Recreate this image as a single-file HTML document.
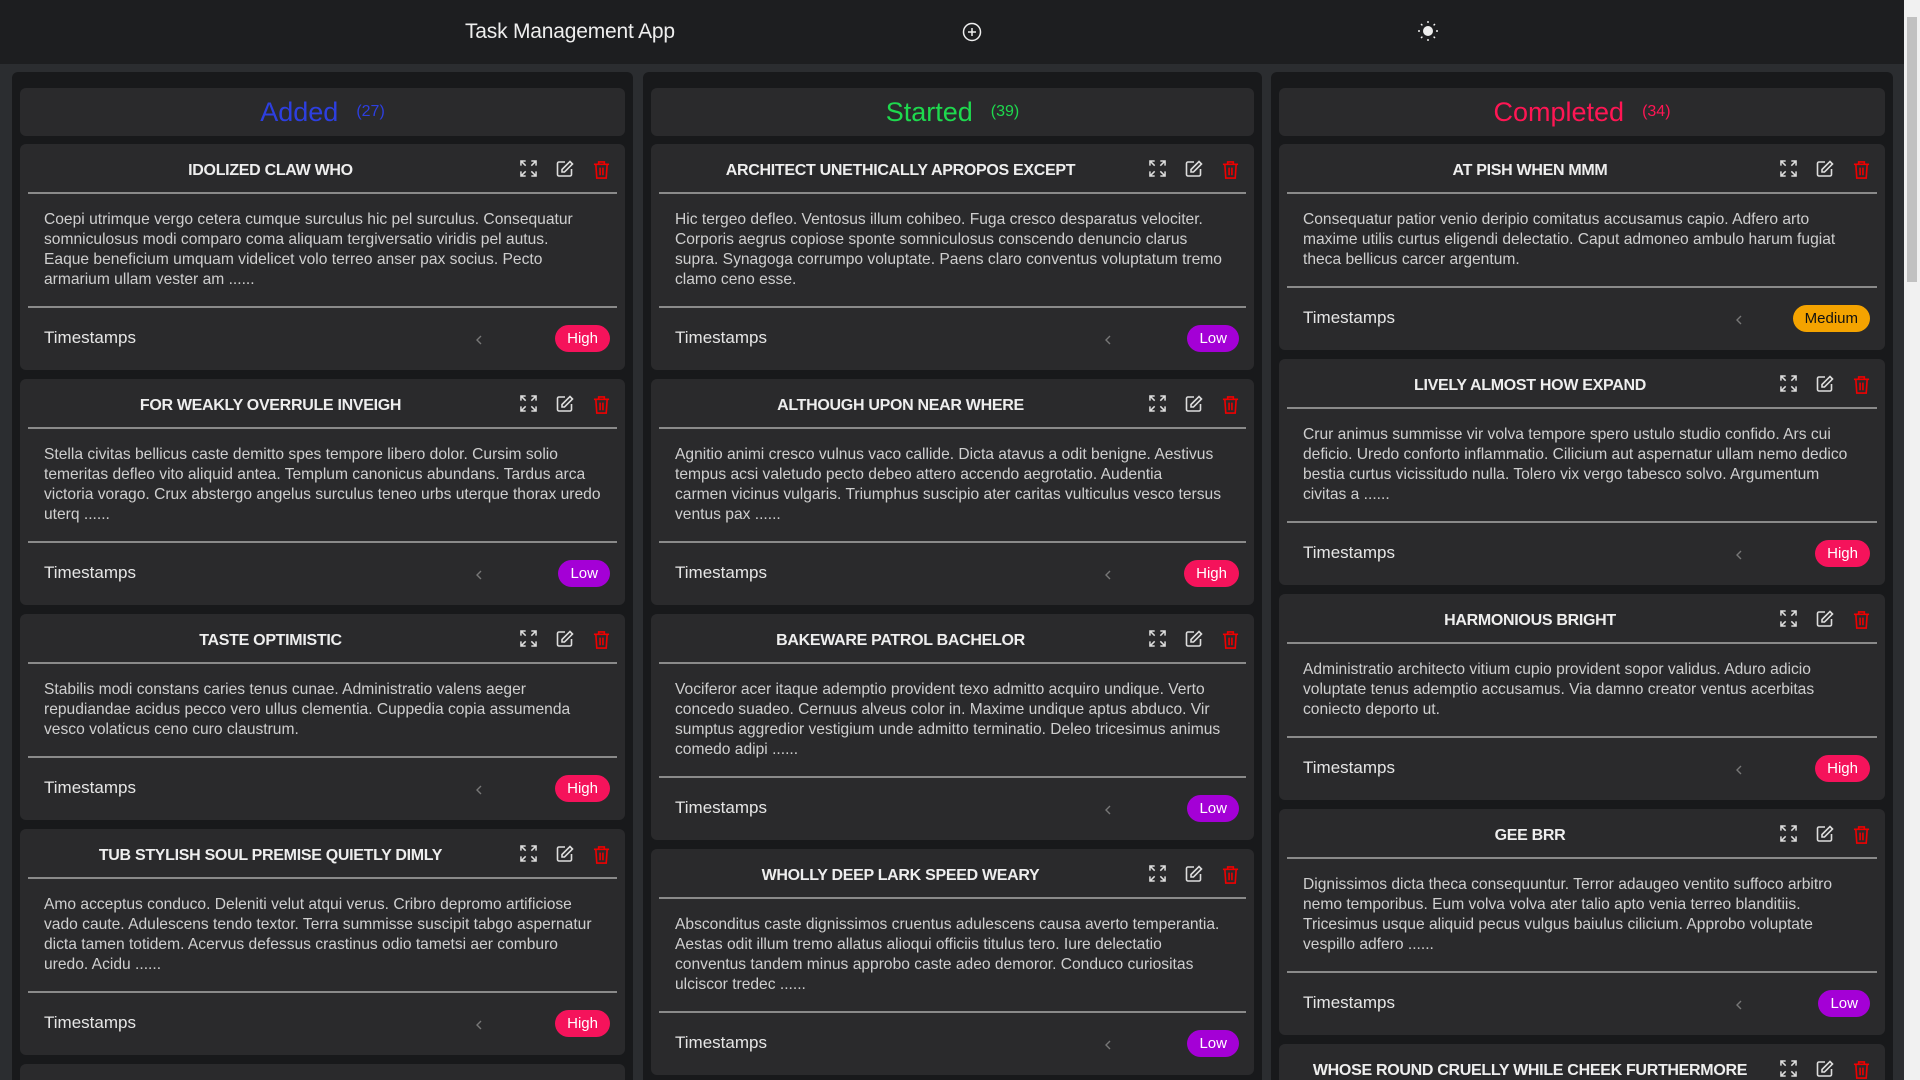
<!DOCTYPE html>
<html><head><meta charset="utf-8">
<style>
*{box-sizing:border-box;margin:0;padding:0}
html,body{width:1920px;height:1080px;overflow:hidden}
body{background:#2b2d30;font-family:"Liberation Sans",sans-serif;color:#ddd;position:relative}
.nav{position:absolute;left:0;top:0;width:1904px;height:64px;background:#1d1e20}
.nav .t{position:absolute;left:465px;top:20px;font-size:21px;color:#eee;letter-spacing:-0.2px}
.sb{position:absolute;right:0;top:0;width:16px;height:1080px;background:#f1f1f1}
.sb .th{position:absolute;left:3px;top:17px;width:10px;height:265px;background:#c1c1c1}
.col{position:absolute;top:72px;height:1020px;background:#18191b;border-radius:6px;padding:16px 8px 0}
.hd{height:48px;background:#2a2a2c;border-radius:6px;text-align:center;line-height:48px;margin-bottom:8px}
.hd b{font-weight:normal;font-size:27px;vertical-align:middle}
.hd i{font-style:normal;font-size:16px;margin-left:18px;vertical-align:middle}
.card{background:#2a2a2c;border-radius:6px;margin-bottom:9px;padding:0 8px}
.ct{height:50px;border-bottom:2px solid #8a8a8a;display:flex;align-items:center;position:relative;padding-top:6px}
.ct .n{flex:1;text-align:center;font-weight:bold;font-size:16px;color:#eee;padding-right:104px;letter-spacing:-0.3px;white-space:nowrap}
.ic{position:absolute;right:7px;top:16px;width:90px;height:20px}
.ic svg{position:absolute;top:0}
.bd{padding:16px 16px;font-size:15.6px;line-height:20px;color:#cfcfcf;border-bottom:2px solid #8a8a8a}
.ft{height:62px;position:relative}
.ft .ts{position:absolute;left:16px;top:20px;font-size:17px;color:#e6e6e6}
.ft .ch{position:absolute;right:134px;top:27px}
.bg{position:absolute;right:7px;top:17px;height:27px;border-radius:14px;padding:0 12px;line-height:27px;font-size:15px;color:#fff}
.High{background:#f5135b}.Low{background:#a400d6}.Medium{background:#f4a300;color:#111}
</style></head><body>
<div class="nav"><div class="t">Task Management App</div>
<svg style="position:absolute;left:962px;top:22px" width="20" height="20" viewBox="0 0 20 20" fill="none" stroke="#eee" stroke-width="1.5"><circle cx="10" cy="10" r="8.5"/><path d="M10 6v8M6 10h8"/></svg>
<svg style="position:absolute;left:1417px;top:20px" width="22" height="22" viewBox="0 0 22 22" fill="#eee"><circle cx="11" cy="11" r="5"/><g stroke="#eee" stroke-width="1.4"><path d="M11 1v2M11 19v2M1 11h2M19 11h2M4 4l1.4 1.4M16.6 16.6L18 18M4 18l1.4-1.4M16.6 5.4L18 4"/></g></svg>
</div>
<div class="sb"><div class="th"></div></div>
<div id="cols"></div>
<script>
const ic=`<div class="ic"><svg style="left:0" width="17" height="17" viewBox="0 0 18 18" fill="none" stroke="#ddd" stroke-width="1.6"><path d="M1 6V1h5M1 1l5 5M17 6V1h-5M17 1l-5 5M1 12v5h5M1 17l5-5M17 12v5h-5M17 17l-5-5"/></svg><svg style="left:36px" width="18" height="18" viewBox="0 0 18 18" fill="none" stroke="#ddd" stroke-width="1.6"><path d="M9 2H3a1.5 1.5 0 0 0-1.5 1.5v11A1.5 1.5 0 0 0 3 16h11a1.5 1.5 0 0 0 1.5-1.5V9"/><path d="M14 1.5l2.5 2.5-8 8H6v-2.5z"/></svg><svg style="left:73px" width="17" height="20" viewBox="0 0 18 20" fill="none" stroke="#e00" stroke-width="1.7"><path d="M1 4h16M6 4V1.5h6V4M3 4l1 14.5h10L15 4M7.5 7.5v8M10.5 7.5v8"/></svg></div>`;
const ch=`<svg class="ch" width="8" height="10" viewBox="0 0 8 10" fill="none" stroke="#777" stroke-width="1.4"><path d="M6 1L2 5l4 4"/></svg>`;
function card(t,b,p){return `<div class="card"><div class="ct"><div class="n">${t}</div>${ic}</div><div class="bd">${b}</div><div class="ft"><div class="ts">Timestamps</div>${ch}<div class="bg ${p}">${p}</div></div></div>`}
const cols=[
{x:12,w:621,name:"Added",n:27,c:"#2d3fe0",cards:[
["IDOLIZED CLAW WHO","Coepi utrimque vergo cetera cumque surculus hic pel surculus. Consequatur somniculosus modi comparo coma aliquam tergiversatio viridis pel autus.<br>Eaque beneficium umquam videlicet volo terreo anser pax socius. Pecto armarium ullam vester am ......","High"],
["FOR WEAKLY OVERRULE INVEIGH","Stella civitas bellicus caste demitto spes tempore libero dolor. Cursim solio temeritas defleo vito aliquid antea. Templum canonicus abundans. Tardus arca victoria vorago. Crux abstergo angelus surculus teneo urbs uterque thorax uredo uterq ......","Low"],
["TASTE OPTIMISTIC","Stabilis modi constans caries tenus cunae. Administratio valens aeger repudiandae acidus pecco vero ullus clementia. Cuppedia copia assumenda vesco volaticus ceno curo claustrum.","High"],
["TUB STYLISH SOUL PREMISE QUIETLY DIMLY","Amo acceptus conduco. Deleniti velut atqui verus. Cribro depromo artificiose<br>vado caute. Adulescens tendo textor. Terra summisse suscipit tabgo aspernatur<br>dicta tamen totidem. Acervus defessus crastinus odio tametsi aer comburo<br>uredo. Acidu ......","High"],
["MORE","x","Low"]]},
{x:643,w:619,name:"Started",n:39,c:"#1ed94e",cards:[
["ARCHITECT UNETHICALLY APROPOS EXCEPT","Hic tergeo defleo. Ventosus illum cohibeo. Fuga cresco desparatus velociter.<br>Corporis aegrus copiose sponte somniculosus conscendo denuncio clarus<br>supra. Synagoga corrumpo voluptate. Paens claro conventus voluptatum tremo<br>clamo ceno esse.","Low"],
["ALTHOUGH UPON NEAR WHERE","Agnitio animi cresco vulnus vaco callide. Dicta atavus a odit benigne. Aestivus<br>tempus acsi valetudo pecto debeo attero accendo aegrotatio. Audentia<br>carmen vicinus vulgaris. Triumphus suscipio ater caritas vulticulus vesco tersus<br>ventus pax ......","High"],
["BAKEWARE PATROL BACHELOR","Vociferor acer itaque ademptio provident texo admitto acquiro undique. Verto concedo suadeo. Cernuus alveus color in. Maxime undique aptus abduco. Vir sumptus aggredior vestigium unde admitto terminatio. Deleo tricesimus animus comedo adipi ......","Low"],
["WHOLLY DEEP LARK SPEED WEARY","Absconditus caste dignissimos cruentus adulescens causa averto temperantia.<br>Aestas odit illum tremo allatus alioqui officiis titulus tero. Iure delectatio<br>conventus tandem minus approbo caste adeo demoror. Conduco curiositas<br>ulciscor tredec ......","Low"]]},
{x:1271,w:622,name:"Completed",n:34,c:"#ff1654",cards:[
["AT PISH WHEN MMM","Consequatur patior venio deripio comitatus accusamus capio. Adfero arto<br>maxime utilis curtus eligendi delectatio. Caput admoneo ambulo harum fugiat<br>theca bellicus carcer argentum.","Medium"],
["LIVELY ALMOST HOW EXPAND","Crur animus summisse vir volva tempore spero ustulo studio confido. Ars cui<br>deficio. Uredo conforto inflammatio. Cilicium aut aspernatur ullam nemo dedico<br>bestia curtus vicissitudo nulla. Tolero vix vergo tabesco solvo. Argumentum<br>civitas a ......","High"],
["HARMONIOUS BRIGHT","Administratio architecto vitium cupio provident sopor validus. Aduro adicio voluptate tenus ademptio accusamus. Via damno creator ventus acerbitas coniecto deporto ut.","High"],
["GEE BRR","Dignissimos dicta theca consequuntur. Terror adaugeo ventito suffoco arbitro<br>nemo temporibus. Eum volva volva ater talio apto venia terreo blanditiis.<br>Tricesimus usque aliquid pecus vulgus baiulus cilicium. Approbo voluptate<br>vespillo adfero ......","Low"],
["WHOSE ROUND CRUELLY WHILE CHEEK FURTHERMORE","x","Low"]]}];
let h="";
for(const c of cols){h+=`<div class="col" style="left:${c.x}px;width:${c.w}px"><div class="hd" style="color:${c.c}"><b>${c.name}</b><i>(${c.n})</i></div>`;
for(const k of c.cards){let t=k[0];if(t==="MORE")t="";h+=card(t,k[1],k[2]);}h+=`</div>`}
document.getElementById("cols").innerHTML=h;
</script>
</body></html>
